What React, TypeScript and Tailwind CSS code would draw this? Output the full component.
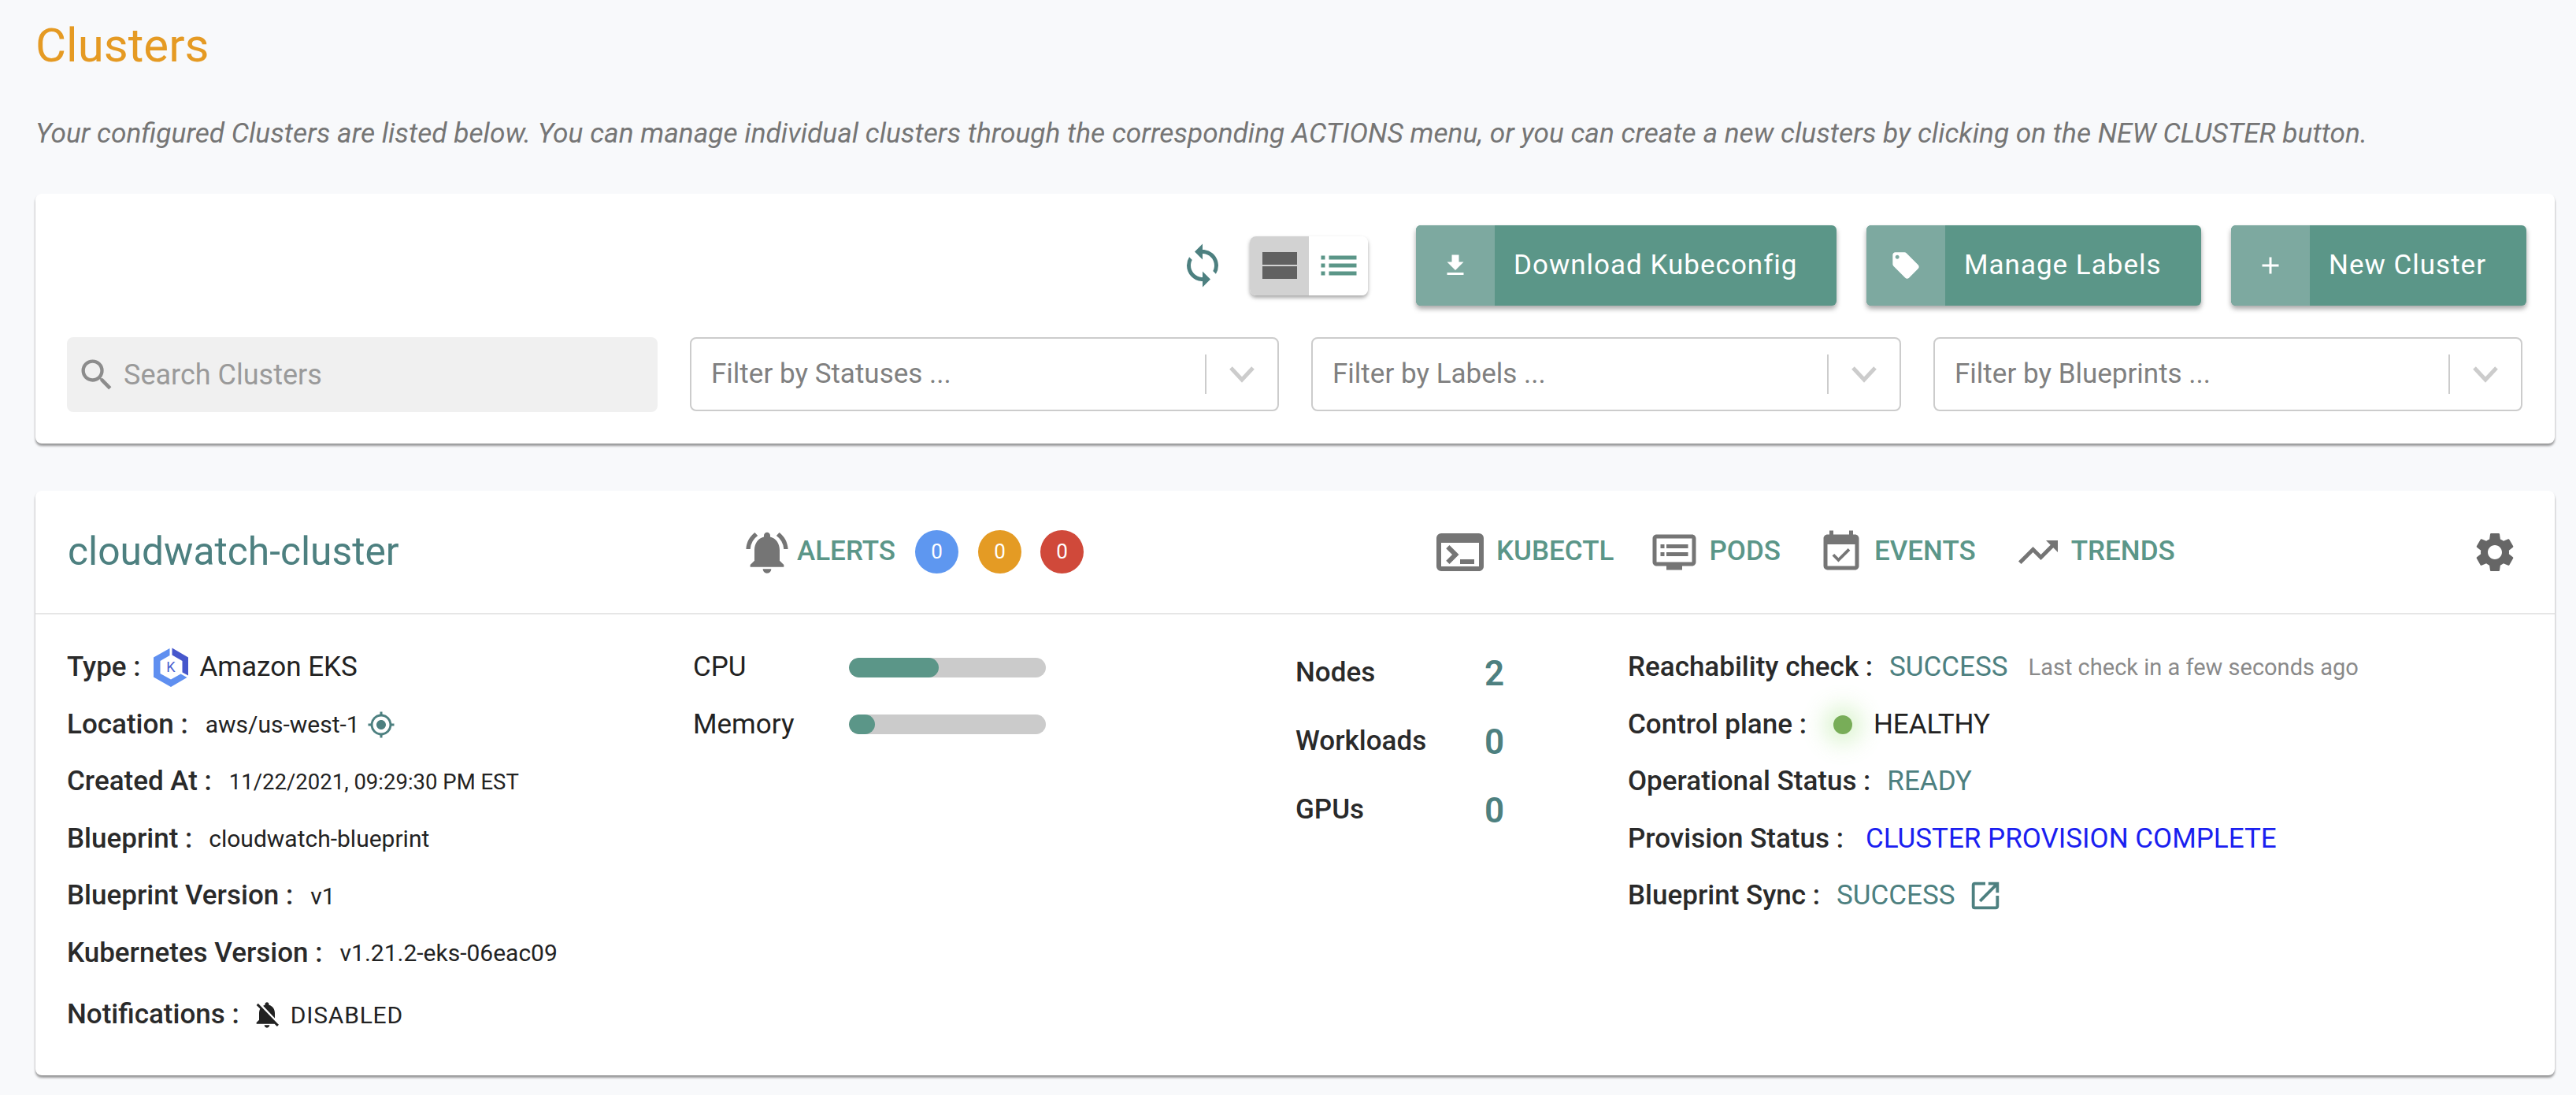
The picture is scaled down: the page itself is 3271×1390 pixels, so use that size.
import React from "react";
import {
  MdAdd,
  MdDvr,
  MdEventAvailable,
  MdFileDownload,
  MdList,
  MdLocalOffer,
  MdMyLocation,
  MdNotificationsActive,
  MdNotificationsOff,
  MdOpenInNew,
  MdSearch,
  MdSettings,
  MdSync,
  MdTerminal,
  MdTrendingUp,
} from "react-icons/md";

function ActionButton({ icon, label, width }: { icon: React.ReactNode; label: string; width: string }) {
  return (
    <div className={`flex h-[102px] ${width} overflow-hidden rounded-[6px] bg-[#5b9688] text-white shadow-[0_4px_6px_rgba(0,0,0,0.35)]`}>
      <div className="flex w-[100px] shrink-0 items-center justify-center bg-[#7da9a0]">{icon}</div>
      <div className="flex flex-1 items-center pl-[24px] text-[35px] tracking-[1px]">{label}</div>
    </div>
  );
}

function FilterSelect({ label }: { label: string }) {
  return (
    <div className="flex h-[94px] items-center rounded-[8px] border-2 border-[#cccccc] bg-white pl-[25px]">
      <span className="flex-1 text-[35px] text-[#808080]">{label}</span>
      <span className="h-[50px] w-[2px] bg-[#cccccc]" />
      <svg width="90" height="44" viewBox="0 0 90 44">
        <path d="M31 14 L45 29 L59 14" fill="none" stroke="#cccccc" strokeWidth="5" />
      </svg>
    </div>
  );
}

function HeaderLink({ icon, label, gap, ml }: { icon: React.ReactNode; label: string; gap: string; ml: string }) {
  return (
    <div className={`flex items-center ${gap} ${ml}`}>
      {icon}
      <span className="text-[35px] font-medium text-[#5b9688]">{label}</span>
    </div>
  );
}

function Badge({ color, ml }: { color: string; ml: string }) {
  return (
    <span className={`flex h-[55px] w-[55px] items-center justify-center rounded-full text-[26px] text-white ${color} ${ml}`}>0</span>
  );
}

function EksLogo() {
  return (
    <svg width="44" height="50" viewBox="0 0 44 50">
      <path d="M20.5 1 L0 12.5 V37.5 L22 50 L42.5 38 L34.5 33.5 L22 40.5 L8.5 33 V17 L20.5 10 Z" fill="#5f8ff0" />
      <path d="M23.5 0.5 L44 12.5 V35.5 L36.5 31.5 V17 L23.5 9.5 Z" fill="#4657cc" />
      <text x="22" y="31" textAnchor="middle" fontSize="18" fontFamily="Roboto, sans-serif" fill="#4a60d0">K</text>
    </svg>
  );
}

function Row({ children, className = "" }: { children: React.ReactNode; className?: string }) {
  return <div className={`flex h-[72.5px] items-center ${className}`}>{children}</div>;
}

function Label({ children }: { children: React.ReactNode }) {
  return <span className="text-[35px] font-medium text-[#2a2a2a]">{children}</span>;
}

function Meter({ label, fill }: { label: string; fill: string }) {
  return (
    <Row>
      <span className="w-[198px] text-[35px] text-[#222222]">{label}</span>
      <div className="h-[25px] w-[250px] overflow-hidden rounded-full bg-[#cbcbcb]">
        <div className={`h-full rounded-full bg-[#5b9688] ${fill}`} />
      </div>
    </Row>
  );
}

function Stat({ label, value }: { label: string; value: string }) {
  return (
    <div className="flex h-[87px] items-center">
      <span className="w-[240px] text-[35px] font-medium text-[#2a2a2a]">{label}</span>
      <span className="text-[44px] font-semibold text-[#4d8080]">{value}</span>
    </div>
  );
}

export default function App() {
  return (
    <div className="h-screen w-full overflow-hidden bg-[#f8f9fb] pl-[45px] pr-[27px] font-['Roboto',sans-serif]">
      <h1 className="pt-[20px] text-[60px] leading-[76px] font-normal text-[#e59a23]">Clusters</h1>
      <p className="mt-[49px] text-[35.28px] leading-[48px] font-normal text-[#757575] italic">
        Your configured Clusters are listed below. You can manage individual clusters through the corresponding ACTIONS menu, or you can create a new clusters by clicking on the NEW CLUSTER button.
      </p>

      <section className="mt-[53px] h-[317px] rounded-[8px] bg-white pt-[40px] shadow-[0_3px_3px_rgba(0,0,0,0.4)]">
        <div className="flex items-center justify-end pr-[36px]">
          <MdSync className="mr-[30px] text-[60px] text-[#4d8080]" />
          <div className="mr-[61px] flex h-[75px] w-[150px] overflow-hidden rounded-[8px] shadow-[0_3px_5px_rgba(0,0,0,0.35)]">
            <div className="flex w-[75px] flex-col items-center justify-center gap-[2px] bg-[#d2d2d2]">
              <span className="h-[16px] w-[44px] bg-[#616161]" />
              <span className="h-[16px] w-[44px] bg-[#616161]" />
            </div>
            <div className="flex w-[75px] items-center justify-center bg-white">
              <MdList className="text-[60px] text-[#5b9688]" />
            </div>
          </div>
          <div className="flex gap-[38px]">
            <ActionButton icon={<MdFileDownload className="text-[36px]" />} label="Download Kubeconfig" width="w-[534px]" />
            <ActionButton icon={<MdLocalOffer className="text-[40px]" />} label="Manage Labels" width="w-[425px]" />
            <ActionButton icon={<MdAdd className="text-[36px]" />} label="New Cluster" width="w-[375px]" />
          </div>
        </div>
        <div className="mt-[40px] grid grid-cols-[750px_748px_749px_748px] gap-[41px] pl-[40px]">
          <div className="flex h-[95px] items-center rounded-[8px] bg-[#f0f0f0] pl-[12px]">
            <MdSearch className="text-[52px] text-[#8c8c8c]" />
            <span className="ml-[8px] text-[36px] text-[#9a9a9a]">Search Clusters</span>
          </div>
          <FilterSelect label="Filter by Statuses ..." />
          <FilterSelect label="Filter by Labels ..." />
          <FilterSelect label="Filter by Blueprints ..." />
        </div>
      </section>

      <section className="mt-[60px] h-[742px] rounded-[8px] bg-white shadow-[0_3px_3px_rgba(0,0,0,0.4)]">
        <header className="flex h-[157px] items-center border-b-2 border-[#e6e6e6] pl-[41px] pr-[46px]">
          <h2 className="w-[856px] text-[49.75px] text-[#4d8080]">cloudwatch-cluster</h2>
          <MdNotificationsActive className="text-[64px] text-[#757575]" />
          <span className="ml-[6px] text-[35px] font-medium text-[#5b9688]">ALERTS</span>
          <Badge color="bg-[#5e97f0]" ml="ml-[25px]" />
          <Badge color="bg-[#e49b24]" ml="ml-[25px]" />
          <Badge color="bg-[#d0493a]" ml="ml-[24px]" />
          <HeaderLink icon={<MdTerminal className="text-[72px] text-[#757575]" />} label="KUBECTL" gap="gap-[10px]" ml="ml-[442px]" />
          <HeaderLink icon={<MdDvr className="text-[60px] text-[#757575]" />} label="PODS" gap="gap-[14px]" ml="ml-[47px]" />
          <HeaderLink icon={<MdEventAvailable className="text-[60px] text-[#757575]" />} label="EVENTS" gap="gap-[12px]" ml="ml-[47px]" />
          <HeaderLink icon={<MdTrendingUp className="text-[60px] text-[#757575]" />} label="TRENDS" gap="gap-[12px]" ml="ml-[49px]" />
          <MdSettings className="ml-auto text-[60px] text-[#666666]" />
        </header>

        <div className="grid grid-cols-[795px_765px_422px_1fr] pl-[40px] pt-[31px]">
          <div>
            <Row>
              <Label>Type :</Label>
              <span className="ml-[16px]"><EksLogo /></span>
              <span className="ml-[15px] text-[35px] text-[#222222]">Amazon EKS</span>
            </Row>
            <Row>
              <Label>Location :</Label>
              <span className="ml-[22px] text-[30px] text-[#222222]">aws/us-west-1</span>
              <MdMyLocation className="ml-[9px] text-[36px] text-[#4d8080]" />
            </Row>
            <Row>
              <Label>Created At :</Label>
              <span className="ml-[22px] text-[27.5px] text-[#222222]">11/22/2021, 09:29:30 PM EST</span>
            </Row>
            <Row>
              <Label>Blueprint :</Label>
              <span className="ml-[21px] text-[30px] text-[#222222]">cloudwatch-blueprint</span>
            </Row>
            <Row>
              <Label>Blueprint Version :</Label>
              <span className="ml-[22px] text-[30px] text-[#222222]">v1</span>
            </Row>
            <Row>
              <Label>Kubernetes Version :</Label>
              <span className="ml-[22px] text-[30px] text-[#222222]">v1.21.2-eks-06eac09</span>
            </Row>
            <Row className="mt-[6px]">
              <Label>Notifications :</Label>
              <MdNotificationsOff className="ml-[15px] text-[40px] text-[#222222]" />
              <span className="ml-[10px] text-[30px] tracking-[0.8px] text-[#222222]">DISABLED</span>
            </Row>
          </div>

          <div>
            <Meter label="CPU" fill="w-[114px]" />
            <Meter label="Memory" fill="w-[33px]" />
          </div>

          <div>
            <Stat label="Nodes" value="2" />
            <Stat label="Workloads" value="0" />
            <Stat label="GPUs" value="0" />
          </div>

          <div>
            <Row>
              <Label>Reachability check :</Label>
              <span className="ml-[21px] text-[35px] text-[#4d8080]">SUCCESS</span>
              <span className="ml-[26px] text-[29px] text-[#8a8a8a]">Last check in a few seconds ago</span>
            </Row>
            <Row>
              <Label>Control plane :</Label>
              <span className="ml-[34px] h-[24px] w-[24px] rounded-full bg-[#78ad58] shadow-[0_0_28px_12px_rgba(140,220,100,0.3)]" />
              <span className="ml-[27px] text-[35px] text-[#222222]">HEALTHY</span>
            </Row>
            <Row>
              <Label>Operational Status :</Label>
              <span className="ml-[21px] text-[35px] text-[#4d8080]">READY</span>
            </Row>
            <Row>
              <Label>Provision Status :</Label>
              <span className="ml-[28px] text-[35px] text-[#1a20f0]">CLUSTER PROVISION COMPLETE</span>
            </Row>
            <Row>
              <Label>Blueprint Sync :</Label>
              <span className="ml-[21px] text-[35px] text-[#4d8080]">SUCCESS</span>
              <MdOpenInNew className="ml-[15px] text-[46px] text-[#4d8080]" />
            </Row>
          </div>
        </div>
      </section>
    </div>
  );
}
